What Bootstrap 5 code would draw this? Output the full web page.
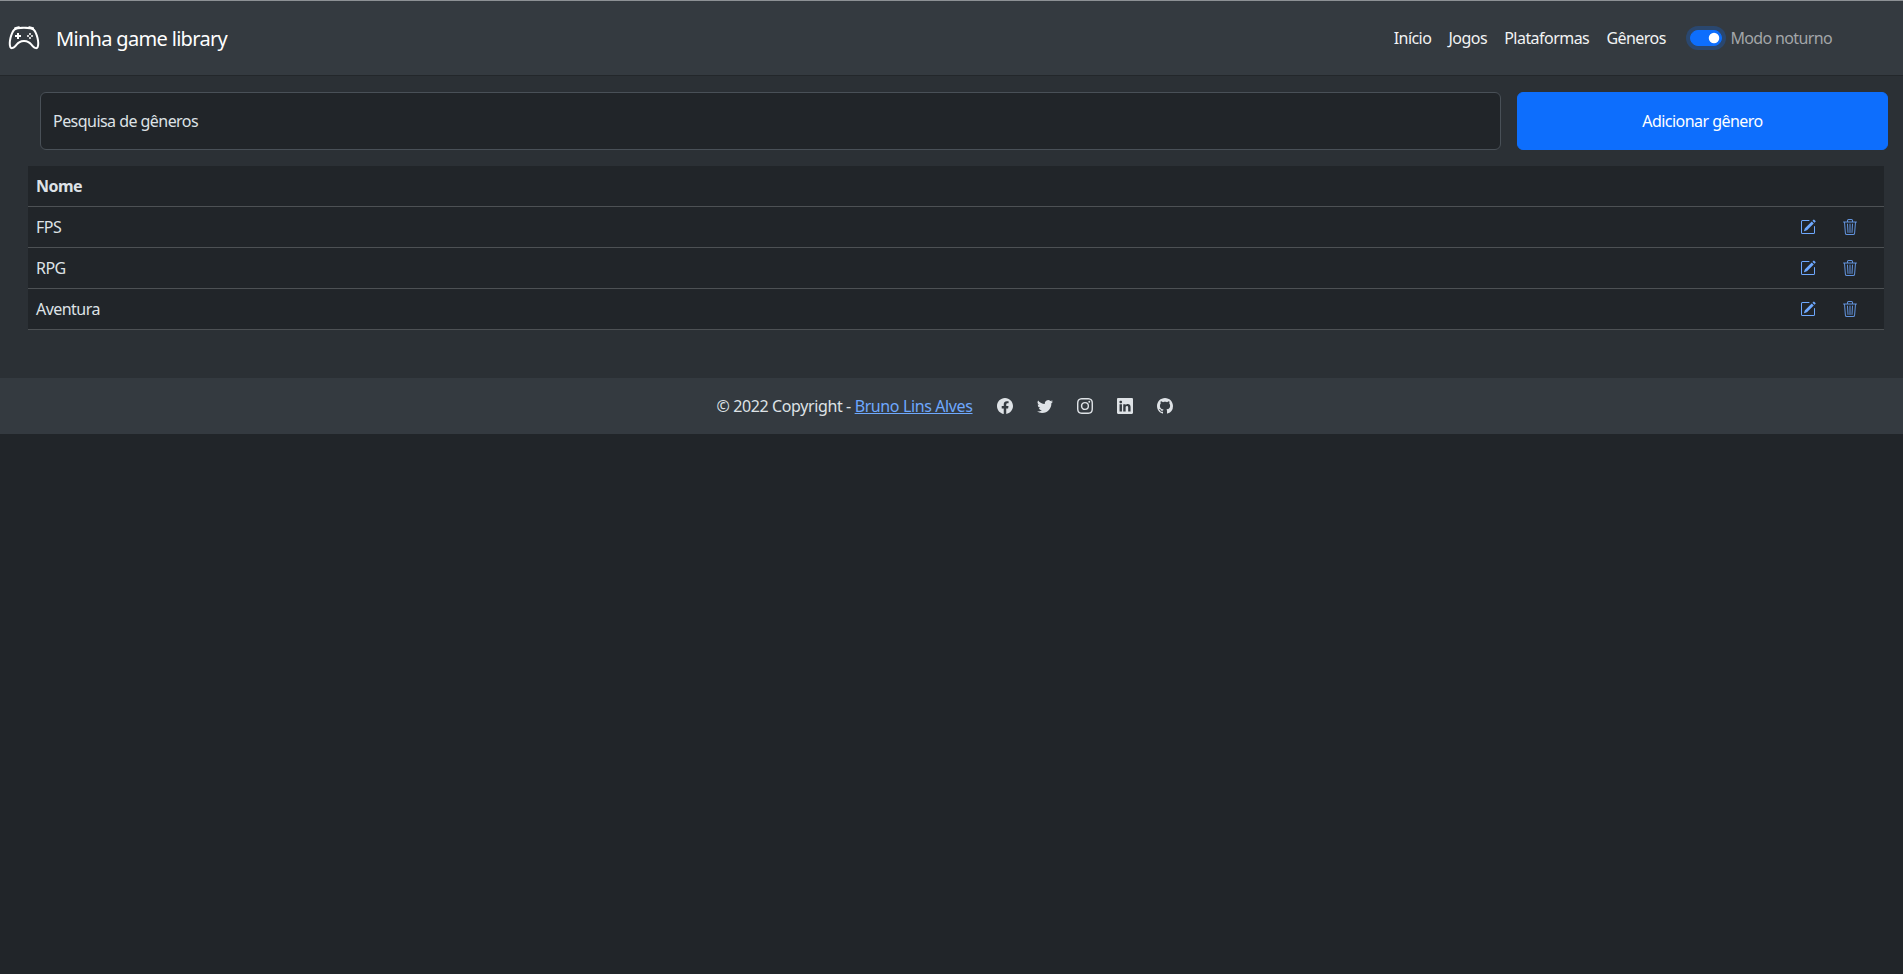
<!DOCTYPE html>
<html lang="pt-BR">
<head>
<meta charset="utf-8">
<title>Minha game library</title>
<link href="https://cdn.jsdelivr.net/npm/bootstrap@5.3.0/dist/css/bootstrap.min.css" rel="stylesheet">
<style>
html,body{height:100%}
body{background:#212529;color:#dee2e6;font-family:"Noto Sans",sans-serif;font-size:16px;letter-spacing:-.034em}
.top-line{height:1px;background:#8d9195}
.app-nav{background:#343a40;height:75px;padding:0 0 0 8px;border-bottom:1px solid #23272b}
.app-nav .navbar-brand{color:#fff;font-size:20px;letter-spacing:-.034em;padding:0;margin:0;display:flex;align-items:center;gap:16px}
.brand-text{padding-top:1px}
.app-links{padding-right:71px;align-items:center}
.app-links .nav-link{color:#f2f3f4;padding:0 8.6px}
.theme-switch{margin:0 0 0 16px;padding-left:0;min-height:0;display:flex;align-items:center}
.theme-switch .form-check-input{width:32px;height:16px;margin:0 8px 0 0;background-color:#0d6efd;border-color:#0d6efd;box-shadow:0 0 0 4px rgba(13,110,253,.25)}
.theme-switch .form-check-label{color:#a3a6a9;letter-spacing:-.04em}
.app-main{background:#2b3035;padding:16px 19px 48px 28px}
.search-row{display:flex;gap:16px;padding-left:12px;margin-right:-4px;margin-bottom:16px}
.search-field{flex:1;height:58px;background:#212529;border:1px solid #495057;color:#dee2e6;padding:0 12px;letter-spacing:-.034em}
.search-field::placeholder{color:#dee2e6;opacity:1}
.search-field:focus{background:#212529;color:#dee2e6}
.add-btn{width:371px;height:58px;flex:none;letter-spacing:-.034em}
.genre-table{--bs-table-bg:#212529;--bs-table-color:#dee2e6;--bs-table-border-color:#4d5154;margin:0}
.genre-table th,.genre-table td{padding:8px;height:41px;vertical-align:middle;background:#212529;color:#dee2e6;border-bottom:1px solid #4d5154;line-height:24px}
.genre-table th{height:40px;padding-bottom:7px}
.actions-col{width:120px;white-space:nowrap}
.row-acts{display:flex;justify-content:flex-end;gap:26px;padding-right:18px}
.row-acts svg{width:16px;height:16px;display:block;fill:#6ea8fe}
.row-acts .bin{opacity:.85}
.app-foot{background:#343a40;height:56px;display:flex;align-items:center;justify-content:center;color:#dee2e6;padding-right:14px;letter-spacing:-.024em}
.app-foot a.credit{color:#6ea8fe}
.soc{display:flex;gap:24px;margin-left:24px}
.soc svg{width:16px;height:16px;display:block;fill:#dee2e6}
</style>
</head>
<body>
<svg width="0" height="0" class="position-absolute">
<symbol id="i-pad" viewBox="0 0 16 16"><path d="M11.5 6.027a.5.5 0 1 1-1 0 .5.5 0 0 1 1 0zm-1.5 1.5a.5.5 0 1 0 0-1 .5.5 0 0 0 0 1zm2.5-.5a.5.5 0 1 1-1 0 .5.5 0 0 1 1 0zm-1.5 1.5a.5.5 0 1 0 0-1 .5.5 0 0 0 0 1zm-6.5-3h1v1h1v1h-1v1h-1v-1h-1v-1h1v-1z"/><path d="M3.051 3.26a.5.5 0 0 1 .354-.613l1.932-.518a.5.5 0 0 1 .62.39c.655-.079 1.35-.117 2.043-.117.72 0 1.443.041 2.12.126a.5.5 0 0 1 .622-.399l1.932.518a.5.5 0 0 1 .306.729c.14.09.266.19.373.297.408.408.78 1.05 1.095 1.772.32.733.599 1.591.805 2.466.206.875.34 1.78.364 2.606.024.816-.059 1.602-.328 2.21a1.42 1.42 0 0 1-1.445.83c-.636-.067-1.115-.394-1.513-.773-.245-.232-.496-.526-.739-.808-.126-.148-.25-.292-.368-.423-.728-.804-1.597-1.527-3.224-1.527-1.627 0-2.496.723-3.224 1.527-.119.131-.242.275-.368.423-.243.282-.494.575-.739.808-.398.38-.877.706-1.513.773a1.42 1.42 0 0 1-1.445-.83c-.27-.608-.352-1.395-.329-2.21.024-.826.16-1.73.365-2.606.206-.875.486-1.733.805-2.466.315-.722.687-1.364 1.094-1.772a2.34 2.34 0 0 1 .433-.335.504.504 0 0 1-.028-.079zm2.036.412c-.877.185-1.469.443-1.733.708-.276.276-.587.783-.885 1.465a13.748 13.748 0 0 0-.748 2.295 12.351 12.351 0 0 0-.339 2.406c-.022.755.062 1.368.243 1.776a.42.42 0 0 0 .426.24c.327-.034.61-.199.929-.502.212-.202.4-.423.615-.674.133-.156.276-.323.44-.504C4.861 9.969 5.978 9.027 8 9.027s3.139.942 3.965 1.855c.164.181.307.348.44.504.214.251.403.472.615.674.318.303.601.468.929.503a.42.42 0 0 0 .426-.241c.18-.408.265-1.02.243-1.776a12.354 12.354 0 0 0-.339-2.406 13.753 13.753 0 0 0-.748-2.295c-.298-.682-.61-1.19-.885-1.465-.264-.265-.856-.523-1.733-.708-.85-.179-1.877-.27-2.913-.27-1.036 0-2.063.091-2.913.27z"/></symbol>
<symbol id="i-edit" viewBox="0 0 16 16"><path d="M15.502 1.94a.5.5 0 0 1 0 .706L14.459 3.69l-2-2L13.502.646a.5.5 0 0 1 .707 0l1.293 1.293zm-1.75 2.456-2-2L4.939 9.21a.5.5 0 0 0-.121.196l-.805 2.414a.25.25 0 0 0 .316.316l2.414-.805a.5.5 0 0 0 .196-.12l6.813-6.814z"/><path fill-rule="evenodd" d="M1 13.5A1.5 1.5 0 0 0 2.5 15h11a1.5 1.5 0 0 0 1.5-1.5v-6a.5.5 0 0 0-1 0v6a.5.5 0 0 1-.5.5h-11a.5.5 0 0 1-.5-.5v-11a.5.5 0 0 1 .5-.5H9a.5.5 0 0 0 0-1H2.5A1.5 1.5 0 0 0 1 2.5v11z"/></symbol>
<symbol id="i-bin" viewBox="0 0 16 16"><path d="M6.5 1h3a.5.5 0 0 1 .5.5v1H6v-1a.5.5 0 0 1 .5-.5ZM11 2.5v-1A1.5 1.5 0 0 0 9.5 0h-3A1.5 1.5 0 0 0 5 1.5v1H2.506a.58.58 0 0 0-.01 0H1.5a.5.5 0 0 0 0 1h.538l.853 10.66A2 2 0 0 0 4.885 16h6.23a2 2 0 0 0 1.994-1.84l.853-10.66h.538a.5.5 0 0 0 0-1h-.995a.59.59 0 0 0-.01 0H11Zm1.958 1-.846 10.58a1 1 0 0 1-.997.92h-6.23a1 1 0 0 1-.997-.92L3.042 3.5h9.916Zm-7.487 1a.5.5 0 0 1 .528.47l.5 8.5a.5.5 0 0 1-.998.06L5 5.03a.5.5 0 0 1 .47-.53Zm5.058 0a.5.5 0 0 1 .47.53l-.5 8.5a.5.5 0 1 1-.998-.06l.5-8.5a.5.5 0 0 1 .528-.47ZM8 4.5a.5.5 0 0 1 .5.5v8.5a.5.5 0 0 1-1 0V5a.5.5 0 0 1 .5-.5Z"/></symbol>
</svg>
<div class="top-line"></div>
<nav class="navbar app-nav">
  <a class="navbar-brand" href="#"><svg width="32" height="32" fill="#fff"><use href="#i-pad"/></svg><span class="brand-text">Minha game library</span></a>
  <div class="d-flex app-links ms-auto">
    <ul class="nav">
      <li class="nav-item"><a class="nav-link" href="#">Início</a></li>
      <li class="nav-item"><a class="nav-link" href="#">Jogos</a></li>
      <li class="nav-item"><a class="nav-link" href="#">Plataformas</a></li>
      <li class="nav-item"><a class="nav-link" href="#">Gêneros</a></li>
    </ul>
    <div class="form-check form-switch theme-switch">
      <input class="form-check-input" type="checkbox" role="switch" id="noturno" checked>
      <label class="form-check-label" for="noturno">Modo noturno</label>
    </div>
  </div>
</nav>
<main class="app-main">
  <div class="search-row">
    <input class="form-control search-field" type="text" placeholder="Pesquisa de gêneros">
    <button class="btn btn-primary add-btn" type="button">Adicionar gênero</button>
  </div>
  <table class="table genre-table">
    <thead><tr><th>Nome</th><th class="actions-col"></th></tr></thead>
    <tbody>
      <tr><td>FPS</td><td><div class="row-acts"><svg><use href="#i-edit"/></svg><svg class="bin"><use href="#i-bin"/></svg></div></td></tr>
      <tr><td>RPG</td><td><div class="row-acts"><svg><use href="#i-edit"/></svg><svg class="bin"><use href="#i-bin"/></svg></div></td></tr>
      <tr><td>Aventura</td><td><div class="row-acts"><svg><use href="#i-edit"/></svg><svg class="bin"><use href="#i-bin"/></svg></div></td></tr>
    </tbody>
  </table>
</main>
<footer class="app-foot">
  <span>© 2022 Copyright - <a class="credit" href="#">Bruno Lins Alves</a></span>
  <div class="soc">
    <svg viewBox="0 0 16 16"><path d="M16 8.049c0-4.446-3.582-8.05-8-8.05C3.58 0-.002 3.603-.002 8.05c0 4.017 2.926 7.347 6.75 7.951v-5.625h-2.03V8.05H6.75V6.275c0-2.017 1.195-3.131 3.022-3.131.876 0 1.791.157 1.791.157v1.98h-1.009c-.993 0-1.303.621-1.303 1.258v1.51h2.218l-.354 2.326H9.25V16c3.824-.604 6.75-3.934 6.75-7.951z"/></svg>
    <svg viewBox="0 0 16 16"><path d="M5.026 15c6.038 0 9.341-5.003 9.341-9.334 0-.14 0-.282-.006-.422A6.685 6.685 0 0 0 16 3.542a6.658 6.658 0 0 1-1.889.518 3.301 3.301 0 0 0 1.447-1.817 6.533 6.533 0 0 1-2.087.793A3.286 3.286 0 0 0 7.875 6.03a9.325 9.325 0 0 1-6.767-3.429 3.289 3.289 0 0 0 1.018 4.382A3.323 3.323 0 0 1 .64 6.575v.045a3.288 3.288 0 0 0 2.632 3.218 3.203 3.203 0 0 1-.865.115 3.23 3.23 0 0 1-.614-.057 3.283 3.283 0 0 0 3.067 2.277A6.588 6.588 0 0 1 .78 13.58a6.32 6.32 0 0 1-.78-.045A9.344 9.344 0 0 0 5.026 15z"/></svg>
    <svg viewBox="0 0 16 16"><path d="M8 0C5.829 0 5.556.01 4.703.048 3.85.088 3.269.222 2.76.42a3.917 3.917 0 0 0-1.417.923A3.927 3.927 0 0 0 .42 2.76C.222 3.268.087 3.85.048 4.7.01 5.555 0 5.827 0 8.001c0 2.172.01 2.444.048 3.297.04.852.174 1.433.372 1.942.205.526.478.972.923 1.417.444.445.89.719 1.416.923.51.198 1.09.333 1.942.372C5.555 15.99 5.827 16 8 16s2.444-.01 3.298-.048c.851-.04 1.434-.174 1.943-.372a3.916 3.916 0 0 0 1.416-.923c.445-.445.718-.891.923-1.417.197-.509.332-1.09.372-1.942C15.99 10.445 16 10.173 16 8s-.01-2.445-.048-3.299c-.04-.851-.175-1.433-.372-1.941a3.926 3.926 0 0 0-.923-1.417A3.911 3.911 0 0 0 13.24.42c-.51-.198-1.092-.333-1.943-.372C10.443.01 10.172 0 7.998 0h.003zm-.717 1.442h.718c2.136 0 2.389.007 3.232.046.78.035 1.204.166 1.486.275.373.145.64.319.92.599.28.28.453.546.598.92.11.281.24.705.275 1.485.039.843.047 1.096.047 3.231s-.008 2.389-.047 3.232c-.035.78-.166 1.203-.275 1.485a2.47 2.47 0 0 1-.599.919c-.28.28-.546.453-.92.598-.28.11-.704.24-1.485.276-.843.038-1.096.047-3.232.047s-2.39-.009-3.233-.047c-.78-.036-1.203-.166-1.485-.276a2.478 2.478 0 0 1-.92-.598 2.48 2.48 0 0 1-.6-.92c-.109-.281-.24-.705-.275-1.485-.038-.843-.046-1.096-.046-3.233 0-2.136.008-2.388.046-3.231.036-.78.166-1.204.276-1.486.145-.373.319-.64.599-.92.28-.28.546-.453.92-.598.282-.11.705-.24 1.485-.276.738-.034 1.024-.044 2.515-.045v.002zm4.988 1.328a.96.96 0 1 0 0 1.92.96.96 0 0 0 0-1.92zm-4.27 1.122a4.109 4.109 0 1 0 0 8.217 4.109 4.109 0 0 0 0-8.217zm0 1.441a2.667 2.667 0 1 1 0 5.334 2.667 2.667 0 0 1 0-5.334z"/></svg>
    <svg viewBox="0 0 16 16"><path d="M0 1.146C0 .513.526 0 1.175 0h13.65C15.474 0 16 .513 16 1.146v13.708c0 .633-.526 1.146-1.175 1.146H1.175C.526 16 0 15.487 0 14.854V1.146zm4.943 12.248V6.169H2.542v7.225h2.401zm-1.2-8.212c.837 0 1.358-.554 1.358-1.248-.015-.709-.52-1.248-1.342-1.248-.822 0-1.359.54-1.359 1.248 0 .694.521 1.248 1.327 1.248h.016zm4.908 8.212V9.359c0-.216.016-.432.08-.586.173-.431.568-.878 1.232-.878.869 0 1.216.662 1.216 1.634v3.865h2.401V9.25c0-2.22-1.184-3.252-2.764-3.252-1.274 0-1.845.7-2.165 1.193v.025h-.016a5.54 5.54 0 0 1 .016-.025V6.169h-2.4c.03.678 0 7.225 0 7.225h2.4z"/></svg>
    <svg viewBox="0 0 16 16"><path d="M8 0C3.58 0 0 3.58 0 8c0 3.54 2.29 6.53 5.47 7.59.4.07.55-.17.55-.38 0-.19-.01-.82-.01-1.49-2.01.37-2.53-.49-2.69-.94-.09-.23-.48-.94-.82-1.13-.28-.15-.68-.52-.01-.53.63-.01 1.08.58 1.23.82.72 1.21 1.87.87 2.33.66.07-.52.28-.87.51-1.07-1.78-.2-3.64-.89-3.64-3.95 0-.87.31-1.59.82-2.15-.08-.2-.36-1.02.08-2.12 0 0 .67-.21 2.2.82.64-.18 1.32-.27 2-.27.68 0 1.36.09 2 .27 1.53-1.04 2.2-.82 2.2-.82.44 1.1.16 1.92.08 2.12.51.56.82 1.27.82 2.15 0 3.07-1.87 3.75-3.65 3.95.29.25.54.73.54 1.48 0 1.07-.01 1.93-.01 2.2 0 .21.15.46.55.38A8.012 8.012 0 0 0 16 8c0-4.42-3.58-8-8-8z"/></svg>
  </div>
</footer>
<script src="https://cdn.jsdelivr.net/npm/bootstrap@5.3.0/dist/js/bootstrap.bundle.min.js"></script>
</body>
</html>
